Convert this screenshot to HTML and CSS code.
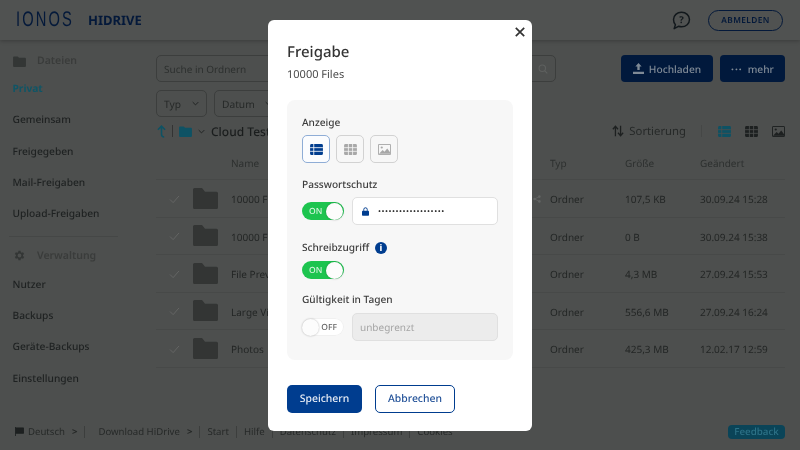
FILE: index.html
```html
<!DOCTYPE html>
<html lang="de">
<head>
<meta charset="utf-8">
<title>HiDrive</title>
<link rel="stylesheet" href="styles.css">
</head>
<body>
<div class="app">
  <header class="topbar">
    <div class="brand"><span class="logo-box"><span class="logo">IONOS</span></span><span class="product">HIDRIVE</span></div>
    <div class="top-actions">
      <svg class="help" viewBox="0 0 20 20" width="21" height="21"><path d="M10 2.200c4.300 0 7.600 3 7.600 6.900s-3.300 6.900-7.600 6.900c-1 0-2-.2-2.900-.5L3 17.800l1.200-3.700C3 12.800 2.400 11 2.400 9.100 2.400 5.200 5.700 2.200 10 2.200z" fill="none" stroke="#12181c" stroke-width="1.400" stroke-linejoin="round"/><text x="10" y="12.500" text-anchor="middle" class="help-q">?</text></svg>
      <span class="logout">ABMELDEN</span>
    </div>
  </header>
  <div class="content">
    <nav class="sidebar">
      <div class="nav-head"><svg viewBox="0 0 14 12" width="13" height="11"><path d="M0 1.500A1 1 0 0 1 1 .5h4l1.500 1.500H13a1 1 0 0 1 1 1V11a1 1 0 0 1-1 1H1a1 1 0 0 1-1-1z" fill="#333635"/></svg><span>Dateien</span></div>
      <a class="nav-item active">Privat</a>
      <a class="nav-item">Gemeinsam</a>
      <a class="nav-item">Freigegeben</a>
      <a class="nav-item">Mail-Freigaben</a>
      <a class="nav-item">Upload-Freigaben</a>
      <div class="nav-sep"></div>
      <div class="nav-head second"><svg viewBox="0 0 24 24" width="13" height="13"><path d="M19.400 13a7.600 7.600 0 0 0 0-2l2.100-1.600-2-3.500-2.500 1a7.500 7.500 0 0 0-1.700-1L15 3.300h-4l-.4 2.600a7.500 7.500 0 0 0-1.700 1l-2.500-1-2 3.500L6.500 11a7.600 7.600 0 0 0 0 2l-2.100 1.600 2 3.500 2.500-1a7.500 7.500 0 0 0 1.700 1l.4 2.600h4l.4-2.600a7.500 7.500 0 0 0 1.700-1l2.500 1 2-3.500zM13 15.500a3.500 3.500 0 1 1 0-7 3.500 3.500 0 0 1 0 7z" fill="#333635" fill-rule="evenodd" transform="translate(-1)"/></svg><span>Verwaltung</span></div>
      <a class="nav-item">Nutzer</a>
      <a class="nav-item">Backups</a>
      <a class="nav-item">Geräte-Backups</a>
      <a class="nav-item">Einstellungen</a>
    </nav>
    <main class="main">
      <div class="toolbar">
        <div class="search"><span>Suche in Ordnern</span>
          <svg viewBox="0 0 14 14" width="10" height="10"><circle cx="6" cy="6" r="4.500" fill="none" stroke="#5e605f" stroke-width="1.500"/><path d="M9.500 9.500L13 13" stroke="#5e605f" stroke-width="1.500"/></svg>
        </div>
        <div class="actions">
          <span class="primary"><svg viewBox="0 0 14 14" width="11" height="11"><path d="M7 0l4 4.500H8.500V9h-3V4.500H3zM0 11h14v3H0z" fill="#7f8a96"/></svg>Hochladen</span>
          <span class="primary more"><span class="dots">···</span>mehr</span>
        </div>
      </div>
      <div class="filters">
        <span class="filter typ">Typ<svg class="chev" viewBox="0 0 10 6" width="7" height="5"><path d="M1 1l4 4 4-4" fill="none" stroke="#1d2020" stroke-width="1.300"/></svg></span>
        <span class="filter datum">Datum<svg class="chev" viewBox="0 0 10 6" width="7" height="5"><path d="M1 1l4 4 4-4" fill="none" stroke="#1d2020" stroke-width="1.300"/></svg></span>
      </div>
      <div class="crumbs">
        <div class="crumb-left">
          <svg viewBox="0 0 10 14" width="9" height="13"><path d="M1 5l4-4 4 4M5 1v9c0 2 1 3 3 3" fill="none" stroke="#0e5264" stroke-width="1.700"/></svg>
          <i class="vsep"></i>
          <svg viewBox="0 0 14 12" width="13" height="11"><path d="M0 1.500A1 1 0 0 1 1 .5h4l1.500 1.500H13a1 1 0 0 1 1 1V11a1 1 0 0 1-1 1H1a1 1 0 0 1-1-1z" fill="#0e5264"/></svg>
          <svg viewBox="0 0 10 6" width="7" height="5"><path d="M1 1l4 4 4-4" fill="none" stroke="#1d2020" stroke-width="1.300"/></svg>
          <span class="crumb-name">Cloud Test</span>
        </div>
        <div class="crumb-right">
          <span class="sort"><svg viewBox="0 0 14 14" width="12" height="12"><path d="M4 13V2M1 5l3-3.500L7 5M10 1v11M7 9l3 3.500L13 9" fill="none" stroke="#1d2020" stroke-width="1.500"/></svg>Sortierung</span>
          <i class="vsep light"></i>
          <svg viewBox="0 0 14 12" width="13" height="11"><rect width="14" height="12" rx="1.500" fill="#0e5264"/><path d="M4 0v12M0 4h14M0 8h14" stroke="#4d4f4e" stroke-width=".9"/></svg>
          <svg viewBox="0 0 14 12" width="13" height="11"><rect width="14" height="12" rx="1.500" fill="#1d2020"/><path d="M4.700 0v12M9.300 0v12M0 4h14M0 8h14" stroke="#4d4f4e" stroke-width=".9"/></svg>
          <svg viewBox="0 0 14 12" width="13" height="11"><rect width="14" height="12" rx="1.500" fill="#1d2020"/><rect x="1" y="1" width="12" height="10" fill="#4d4f4e"/><circle cx="4" cy="3.800" r="1.200" fill="#1d2020"/><path d="M1 10.500l4-4 2 2 3-3.500 3 4v1.500H1z" fill="#1d2020"/></svg>
        </div>
      </div>
      <div class="table">
        <div class="row head"><span></span><span></span><span>Name</span><span>Typ</span><span>Größe</span><span>Geändert</span></div>
        <div class="row"><svg class="check" viewBox="0 0 12 10" width="11" height="9"><path d="M1 5l3.500 3.500L11 1" fill="none" stroke="#666867" stroke-width="1"/></svg><svg class="folder" viewBox="0 0 25 20" width="25" height="21" preserveAspectRatio="none"><path d="M0 1.500A1.500 1.500 0 0 1 1.500 0h7.500l3 3.500h11.500A1.500 1.500 0 0 1 25 5v13.500a1.500 1.500 0 0 1-1.500 1.500h-22A1.500 1.500 0 0 1 0 18.500z" fill="#333534"/></svg><span class="name-cell">10000 Files<svg viewBox="0 0 10 10" width="8" height="8"><circle cx="8" cy="2" r="1.600" fill="#626463"/><circle cx="8" cy="8" r="1.600" fill="#626463"/><circle cx="2" cy="5" r="1.600" fill="#626463"/><path d="M8 2L2 5l6 3" fill="none" stroke="#626463"/></svg></span><span>Ordner</span><span>107,5 KB</span><span>30.09.24 15:28</span></div>
        <div class="row"><svg class="check" viewBox="0 0 12 10" width="11" height="9"><path d="M1 5l3.500 3.500L11 1" fill="none" stroke="#666867" stroke-width="1"/></svg><svg class="folder" viewBox="0 0 25 20" width="25" height="21" preserveAspectRatio="none"><path d="M0 1.500A1.500 1.500 0 0 1 1.500 0h7.500l3 3.500h11.500A1.500 1.500 0 0 1 25 5v13.500a1.500 1.500 0 0 1-1.500 1.500h-22A1.500 1.500 0 0 1 0 18.500z" fill="#333534"/></svg><span>10000 Files</span><span>Ordner</span><span>0 B</span><span>30.09.24 15:38</span></div>
        <div class="row"><svg class="check" viewBox="0 0 12 10" width="11" height="9"><path d="M1 5l3.500 3.500L11 1" fill="none" stroke="#666867" stroke-width="1"/></svg><svg class="folder" viewBox="0 0 25 20" width="25" height="21" preserveAspectRatio="none"><path d="M0 1.500A1.500 1.500 0 0 1 1.500 0h7.500l3 3.500h11.500A1.500 1.500 0 0 1 25 5v13.500a1.500 1.500 0 0 1-1.500 1.500h-22A1.500 1.500 0 0 1 0 18.500z" fill="#333534"/></svg><span>File Preview</span><span>Ordner</span><span>4,3 MB</span><span>27.09.24 15:53</span></div>
        <div class="row"><svg class="check" viewBox="0 0 12 10" width="11" height="9"><path d="M1 5l3.500 3.500L11 1" fill="none" stroke="#666867" stroke-width="1"/></svg><svg class="folder" viewBox="0 0 25 20" width="25" height="21" preserveAspectRatio="none"><path d="M0 1.500A1.500 1.500 0 0 1 1.500 0h7.500l3 3.500h11.500A1.500 1.500 0 0 1 25 5v13.500a1.500 1.500 0 0 1-1.500 1.500h-22A1.500 1.500 0 0 1 0 18.500z" fill="#333534"/></svg><span>Large Videos</span><span>Ordner</span><span>556,6 MB</span><span>27.09.24 16:24</span></div>
        <div class="row"><svg class="check" viewBox="0 0 12 10" width="11" height="9"><path d="M1 5l3.500 3.500L11 1" fill="none" stroke="#666867" stroke-width="1"/></svg><svg class="folder" viewBox="0 0 25 20" width="25" height="21" preserveAspectRatio="none"><path d="M0 1.500A1.500 1.500 0 0 1 1.500 0h7.500l3 3.500h11.500A1.500 1.500 0 0 1 25 5v13.500a1.500 1.500 0 0 1-1.500 1.500h-22A1.500 1.500 0 0 1 0 18.500z" fill="#333534"/></svg><span>Photos</span><span>Ordner</span><span>425,3 MB</span><span>12.02.17 12:59</span></div>
      </div>
    </main>
  </div>
  <footer class="footer">
    <div class="links">
      <svg viewBox="0 0 10 10" width="9" height="9"><path d="M.5 0v10M.5 1h9v6h-9" fill="#1d2020" stroke="#1d2020"/></svg>
      <span class="lang">Deutsch</span><span class="gt">&gt;</span><i class="fsep wide"></i>
      <span>Download HiDrive</span><span class="gt">&gt;</span><i class="fsep"></i>
      <span>Start</span><i class="fsep"></i>
      <span>Hilfe</span><i class="fsep"></i>
      <span>Datenschutz</span><i class="fsep"></i>
      <span>Impressum</span><i class="fsep"></i>
      <span>Cookies</span>
    </div>
    <span class="feedback">Feedback</span>
  </footer>
</div>
<div class="scrim">
  <section class="modal">
    <svg class="close" viewBox="0 0 10 10" width="10" height="10"><path d="M.8.8l8.400 8.400M9.200.8L.8 9.200" stroke="#333" stroke-width="1.700"/></svg>
    <h1>Freigabe</h1>
    <p class="sub">10000 Files</p>
    <div class="panel">
      <div class="label">Anzeige</div>
      <div class="views">
        <span class="view on"><svg viewBox="0 0 14 12" width="13" height="11"><rect width="14" height="12" rx="1.500" fill="#003d8f"/><path d="M4 0v12M0 4h14M0 8h14" stroke="#fff" stroke-width=".9"/></svg></span>
        <span class="view"><svg viewBox="0 0 14 12" width="13" height="11"><rect width="14" height="12" rx="1.500" fill="#a8a8a8"/><path d="M4.700 0v12M9.300 0v12M0 4h14M0 8h14" stroke="#f7f7f7" stroke-width=".9"/></svg></span>
        <span class="view"><svg viewBox="0 0 14 12" width="13" height="11"><rect width="14" height="12" rx="1" fill="#a8a8a8"/><rect x="1" y="1" width="12" height="10" fill="#f7f7f7"/><circle cx="4" cy="3.800" r="1.200" fill="#a8a8a8"/><path d="M1 10.500l4-4 2 2 3-3.500 3 4v1.500H1z" fill="#a8a8a8"/></svg></span>
      </div>
      <div class="label gap-pass">Passwortschutz</div>
      <div class="line">
        <span class="toggle on"><span class="state">ON</span><i class="knob"></i></span>
        <span class="field"><svg viewBox="0 0 10 12" width="7" height="9"><path d="M2.500 5V3.200a2.500 2.500 0 0 1 5 0V5" fill="none" stroke="#003d8f" stroke-width="1.400"/><rect y="5" width="10" height="7" rx="1" fill="#003d8f"/></svg><span class="dotsfield">•••••••••••••••••••</span></span>
      </div>
      <div class="label gap-write">Schreibzugriff<svg class="info" viewBox="0 0 12 12" width="12" height="12"><circle cx="6" cy="6" r="6" fill="#003d8f"/><text x="6" y="9.300" text-anchor="middle" class="info-i">i</text></svg></div>
      <span class="toggle on solo"><span class="state">ON</span><i class="knob"></i></span>
      <div class="label gap-valid">Gültigkeit in Tagen</div>
      <div class="line tight">
        <span class="toggle off"><i class="knob"></i><span class="state">OFF</span></span>
        <span class="field disabled">unbegrenzt</span>
      </div>
    </div>
    <div class="buttons">
      <span class="btn save">Speichern</span>
      <span class="btn cancel">Abbrechen</span>
    </div>
  </section>
</div>
</body>
</html>
```

FILE: styles.css
```css
* { box-sizing: border-box; }
html, body { margin: 0; padding: 0; height: 450px; overflow: hidden; }
body { font-family: "Noto Sans", "Open Sans", sans-serif; color: #1e2121; background: #4d4f4e; font-size: 11px; position: relative; text-rendering: geometricPrecision; }
svg { display: block; flex: none; }

.app { width: 800px; height: 450px; display: flex; flex-direction: column; overflow: hidden; filter: blur(.35px); }

.topbar { height: 40px; flex: none; display: flex; justify-content: space-between; align-items: center; padding: 0 17px 0 16px; background: #505251; box-shadow: 0 1px 4px rgba(0,0,0,.25); }
.brand { display: flex; align-items: center; }
.logo-box { width: 72px; display: block; }
.logo { font-family: "Liberation Sans", sans-serif; font-size: 21px; line-height: 22px; letter-spacing: 3px; color: #04193a; display: inline-block; transform: scaleX(.7); transform-origin: left center; }
.product { font-weight: 700; font-size: 13px; color: #04193a; }
.top-actions { display: flex; align-items: center; gap: 16px; }
.help-q { font-size: 9px; font-weight: 700; fill: #12181c; }
.logout { width: 75px; height: 21px; border: 1px solid #04193a; border-radius: 11px; color: #04193a; font-size: 8.300px; font-weight: 600; letter-spacing: .4px; display: flex; align-items: center; justify-content: center; }

.content { flex: 1; display: flex; min-height: 0; }

.sidebar { width: 156px; flex: none; padding: 13px 0 0 12.500px; display: flex; flex-direction: column; }
.nav-head { display: flex; align-items: center; gap: 11.500px; height: 16px; color: #3a3c3b; font-size: 10.500px; font-weight: 600; margin-bottom: 3.350px; }
.nav-item { height: 31.300px; flex: none; display: flex; align-items: center; font-size: 10.200px; font-weight: 500; color: #1e2121; }
.nav-item.active { color: #0f5566; font-weight: 700; }
.nav-sep { width: 109px; height: 1px; flex: none; background: #454746; margin: 7px 0 11px -4px; }
.nav-head.second { margin-bottom: 4.350px; }

.main { flex: 1; padding: 15px 15px 0 0; min-width: 0; }
.toolbar { display: flex; justify-content: space-between; }
.search { width: 400px; height: 27px; border: 1px solid #3c3e3d; border-radius: 5px; padding: 0 7px; display: flex; align-items: center; justify-content: space-between; color: #2d302f; font-size: 10px; }
.actions { display: flex; gap: 7px; }
.primary { height: 27px; width: 92px; background: #01193c; color: #7f8a96; border-radius: 4px; font-size: 10.200px; font-weight: 500; display: flex; align-items: center; justify-content: center; gap: 5px; }
.primary.more { width: 65px; }
.dots { font-weight: 700; letter-spacing: 1px; }

.filters { display: flex; gap: 7px; margin-top: 8px; }
.filter { height: 27px; border: 1px solid #3c3e3d; border-radius: 5px; display: flex; align-items: center; justify-content: space-between; padding: 0 7px; font-size: 10.200px; color: #262928; }
.typ { width: 51px; }
.datum { width: 66px; }

.crumbs { display: flex; justify-content: space-between; align-items: center; height: 20px; margin-top: 4px; }
.crumb-left, .crumb-right { display: flex; align-items: center; }
.crumb-left { gap: 6px; }
.crumb-left svg:first-child { margin-left: 1px; }
.vsep { width: 1px; height: 12px; background: #333; display: block; }
.vsep.light { background: #454746; margin: 0 2px 0 1px; }
.crumb-name { font-size: 12px; font-weight: 500; color: #1a1d1d; }
.crumb-right { gap: 14px; }
.sort { display: flex; align-items: center; gap: 5px; font-size: 11.300px; color: #262928; }

.table { margin-top: 13px; }
.row { display: grid; grid-template-columns: 37px 38px 319px 75px 75px 85px; align-items: center; height: 37.500px; padding-top: 1.500px; border-bottom: 1px solid #474948; font-size: 10px; color: #232625; }
.row.head { height: 26px; color: #2d302f; padding: 0 0 7px; }
.check { justify-self: center; }
.folder { margin-bottom: 2px; }
.name-cell { display: flex; align-items: center; justify-content: space-between; padding-right: 9px; }

.footer { height: 35px; flex: none; display: flex; justify-content: space-between; align-items: center; padding: 0 15px 2px; background: #4d4f4e; font-size: 9.600px; color: #262928; }
.links { display: flex; align-items: center; }
.lang { margin-left: 4px; }
.gt { margin-left: 7px; font-weight: 700; font-size: 9.600px; }
.fsep { width: 1px; height: 12px; background: #3c3e3d; margin: 0 7px; display: block; }
.fsep.wide { margin: 0 13px 0 7px; }
.feedback { width: 57px; height: 14px; border-radius: 4px; background: #0a4458; color: #2d7287; font-size: 9.800px; font-weight: 500; display: flex; align-items: center; justify-content: center; }

.scrim { position: absolute; inset: 0; display: flex; justify-content: center; align-items: flex-start; padding-top: 20px; }
.modal { width: 264px; height: 411px; background: #fff; border-radius: 6px; padding: 21px 19px 18px; position: relative; color: #333; filter: blur(.3px); }
.close { position: absolute; top: 7px; right: 7.500px; }
h1 { margin: 0; font-size: 15px; line-height: 23px; font-weight: 500; color: #333; }
.sub { margin: 3px 0 0; font-size: 11px; line-height: 16px; color: #4a4a4a; }

.panel { width: 226px; height: 260px; margin-top: 17px; background: #f7f7f7; border-radius: 8px; padding: 15px 15px 15px; }
.label { display: flex; align-items: center; gap: 6px; font-size: 10.100px; line-height: 15px; font-weight: 500; color: #3c3c3c; }
.views { display: flex; gap: 6px; margin-top: 5px; }
.view { width: 28px; height: 28px; border: 1px solid #d2d2d2; border-radius: 5px; display: flex; align-items: center; justify-content: center; }
.view.on { border-color: #8fadd6; background: #fbfcfe; }
.gap-pass { margin-top: 14px; }
.line { display: flex; gap: 8px; align-items: center; margin-top: 5px; }
.toggle { width: 42px; height: 18px; border-radius: 9px; display: flex; align-items: center; justify-content: space-between; font-size: 8.500px; font-weight: 500; }
.toggle.on { background: #1dc44f; color: #d6f5df; padding: 0 1px 0 7px; }
.toggle.off { background: #fff; color: #666; padding: 0 7px 0 0; box-shadow: inset 0 0 0 1px #f0f0f0; }
.knob { width: 17px; height: 17px; border-radius: 50%; background: #fcfcfc; box-shadow: 0 0 2px rgba(0,0,0,.3); display: block; }
.field { width: 146px; height: 28px; border: 1px solid #e0e0e0; background: #fff; border-radius: 5px; display: flex; align-items: center; padding: 0 9px; gap: 9px; font-size: 10px; }
.dotsfield { font-size: 8px; letter-spacing: .5px; color: #333; }
.field.disabled { background: #ececec; color: #a5a5a5; padding: 0 7px; }
.gap-write { margin-top: 15px; }
.info-i { font-size: 9px; font-weight: 800; fill: #fff; font-family: "Noto Sans", sans-serif; }
.solo { margin-top: 6px; }
.gap-valid { margin-top: 13px; }
.line.tight { margin-top: 6px; }

.buttons { display: flex; gap: 13px; margin-top: 25px; }
.btn { height: 28px; border-radius: 5px; display: flex; align-items: center; justify-content: center; font-size: 10.400px; font-weight: 500; }
.save { width: 75px; background: #003d8f; color: #e9eef6; }
.cancel { width: 80px; border: 1.500px solid #003d8f; color: #1f4f97; background: #fff; }
```
